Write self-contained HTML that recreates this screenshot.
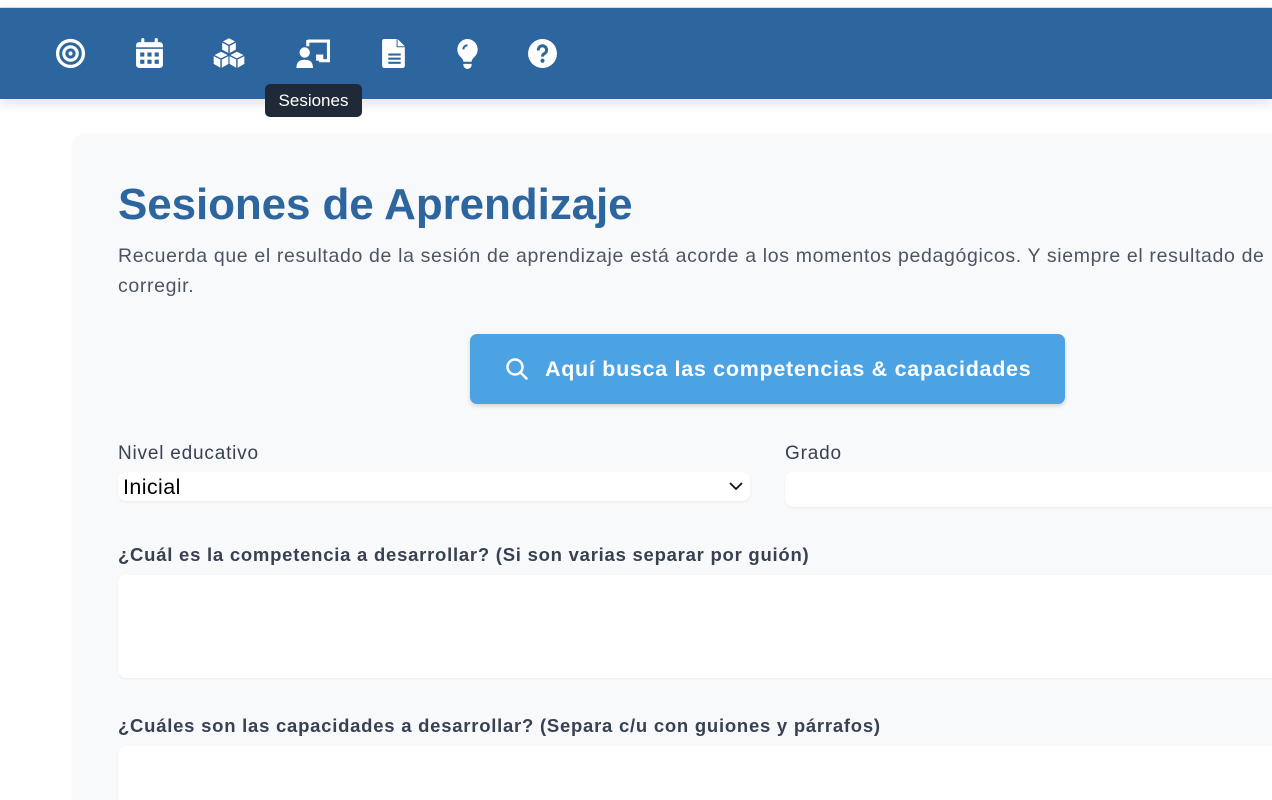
<!DOCTYPE html>
<html><head><meta charset="utf-8"><style>
*{margin:0;padding:0;box-sizing:border-box}
html,body{width:1272px;height:800px;overflow:hidden;background:#fff;font-family:"Liberation Sans",sans-serif;position:relative}
.bar{position:absolute;left:0;top:8px;width:1272px;height:91px;background:#2d669e;box-shadow:0 4px 12px rgba(0,0,0,.12)}
.top{position:absolute;left:0;top:0;width:1272px;height:8px;background:#fff;border-bottom:1px solid #ddd}
.ic{position:absolute;top:38px;width:31px;height:31px}
.tip{position:absolute;left:265px;top:84px;width:97px;height:33px;background:#1f2937;border-radius:5px;color:#fff;font-size:17px;line-height:33px;text-align:center}
.panel{position:absolute;left:73px;top:135px;width:1199px;height:665px;background:#f8f9fb;border-radius:12px 0 0 0;box-shadow:0 0 3px rgba(0,0,0,.06)}
h1{position:absolute;left:118px;top:180px;font-size:44px;font-weight:bold;color:#2d669e;white-space:nowrap;letter-spacing:-.1px}
.p{position:absolute;left:118px;top:241px;font-size:19.5px;line-height:30px;color:#4b5563;white-space:nowrap;letter-spacing:.65px}
.btn{position:absolute;left:470px;top:334px;width:595px;height:70px;background:#4ca3e3;border-radius:7px;box-shadow:0 2px 4px rgba(0,0,0,.15);color:#fff;font-size:21.5px;font-weight:bold;line-height:70px;letter-spacing:.7px}
.lbl{position:absolute;font-size:19px;color:#374151;white-space:nowrap;letter-spacing:.8px}
.q{font-weight:bold;font-size:18.5px;letter-spacing:.75px}
.box{position:absolute;background:#fff;border-radius:8px;box-shadow:0 1px 2px rgba(0,0,0,.06)}
</style></head><body>
<div class="top"></div>
<div class="bar"></div>
<svg class="ic" style="left:55px" viewBox="0 0 30 30"><circle cx="15" cy="15" r="12.5" fill="none" stroke="#fff" stroke-width="3.2"/><circle cx="15" cy="15" r="6.5" fill="none" stroke="#fff" stroke-width="3"/><circle cx="15" cy="15" r="2" fill="#fff"/></svg>
<svg class="ic" style="left:134px" viewBox="0 0 30 30"><rect x="2" y="4" width="26" height="25" rx="3" fill="#fff"/><rect x="7" y="0" width="3" height="7" rx="1.5" fill="#fff"/><rect x="20" y="0" width="3" height="7" rx="1.5" fill="#fff"/><rect x="2" y="9" width="26" height="1.5" fill="#2d669e"/><g fill="#2d669e"><rect x="6" y="14" width="4" height="4"/><rect x="13" y="14" width="4" height="4"/><rect x="20" y="14" width="4" height="4"/><rect x="6" y="21" width="4" height="4"/><rect x="13" y="21" width="4" height="4"/><rect x="20" y="21" width="4" height="4"/></g></svg>
<svg class="ic" style="left:212px;width:34px;height:34px;top:37px" viewBox="0 0 30 30"><g fill="#fff" stroke="#2d669e" stroke-width="1"><path d="M8.5 4l6.5-3.5 6.5 3.5v7.5l-6.5 3.5-6.5-3.5z"/><path d="M1 16l7-3.5 7 3.5v8l-7 4-7-4z"/><path d="M15 16l7-3.5 7 3.5v8l-7 4-7-4z"/></g><g stroke="#2d669e" stroke-width="1.3" fill="none"><path d="M8.5 4l6.5 3.5 6.5-3.5M15 7.5v7"/><path d="M1 16l7 3.5 7-3.5M8 19.5v8"/><path d="M15 16l7 3.5 7-3.5M22 19.5v8"/></g></svg>
<svg class="ic" style="left:296px;width:36px" viewBox="0 0 34 30"><path d="M11 3h20v19h-9" fill="none" stroke="#fff" stroke-width="3"/><path d="M11 2v6" stroke="#fff" stroke-width="3"/><rect x="19" y="16" width="7" height="6" fill="#fff"/><circle cx="8" cy="14" r="5" fill="#fff"/><path d="M0 29c0-6 3-8 8-8s8 2 8 8z" fill="#fff"/></svg>
<svg class="ic" style="left:379px" viewBox="0 0 30 30"><path d="M5 1h12l8 8v18a2 2 0 0 1-2 2H5a2 2 0 0 1-2-2V3a2 2 0 0 1 2-2z" fill="#fff"/><path d="M17 1v8h8" fill="#2d669e"/><path d="M18 1l7 7h-7z" fill="#fff"/><g fill="#2d669e"><rect x="9" y="15" width="12" height="2"/><rect x="9" y="19" width="12" height="2"/><rect x="9" y="23" width="12" height="2"/></g></svg>
<svg class="ic" style="left:452px" viewBox="0 0 30 30"><path d="M15 1a10 10 0 0 1 7 17c-2 2-3 3-3 5h-8c0-2-1-3-3-5A10 10 0 0 1 15 1z" fill="#fff"/><path d="M11 25h8v1a4 4 0 0 1-8 0z" fill="#fff"/><path d="M11 11a4 4 0 0 1 4-4" stroke="#2d669e" stroke-width="2" fill="none"/></svg>
<svg class="ic" style="left:527px" viewBox="0 0 30 30"><circle cx="15" cy="15" r="14" fill="#fff"/><path d="M11 12a4 4 0 1 1 6 3c-2 1-2 2-2 3" fill="none" stroke="#2d669e" stroke-width="3"/><circle cx="15" cy="22" r="2" fill="#2d669e"/></svg>
<div class="panel"></div>
<div class="tip">Sesiones</div>
<h1>Sesiones de Aprendizaje</h1>
<div class="p">Recuerda que el resultado de la sesión de aprendizaje está acorde a los momentos pedagógicos. Y siempre el resultado de<br>corregir.</div>
<div class="btn"><svg style="position:absolute;left:35px;top:23px" width="24" height="24" viewBox="0 0 24 24"><circle cx="10" cy="10" r="7.5" fill="none" stroke="#fff" stroke-width="2.5"/><path d="M15.5 15.5l6 6" stroke="#fff" stroke-width="2.5" stroke-linecap="round"/></svg><span style="position:absolute;left:75px">Aquí busca las competencias &amp; capacidades</span></div>
<div class="lbl" style="left:118px;top:443px">Nivel educativo</div>
<div class="lbl" style="left:785px;top:443px">Grado</div>
<div class="box" style="left:118px;top:472px;width:632px;height:29px"><span style="position:absolute;left:5px;top:3px;font-size:21.5px;color:#000;letter-spacing:.4px">Inicial</span><svg style="position:absolute;left:610px;top:8px" width="16" height="12" viewBox="0 0 16 12"><path d="M2 3l6 6 6-6" fill="none" stroke="#111" stroke-width="1.8"/></svg></div>
<div class="box" style="left:785px;top:472px;width:487px;height:35px;border-radius:8px 0 0 8px"></div>
<div class="lbl q" style="left:118px;top:544px">¿Cuál es la competencia a desarrollar? (Si son varias separar por guión)</div>
<div class="box" style="left:118px;top:575px;width:1154px;height:103px;border-radius:8px 0 0 8px"></div>
<div class="lbl q" style="left:118px;top:715px">¿Cuáles son las capacidades a desarrollar? (Separa c/u con guiones y párrafos)</div>
<div class="box" style="left:118px;top:746px;width:1154px;height:54px;border-radius:8px 0 0 0"></div>
</body></html>
